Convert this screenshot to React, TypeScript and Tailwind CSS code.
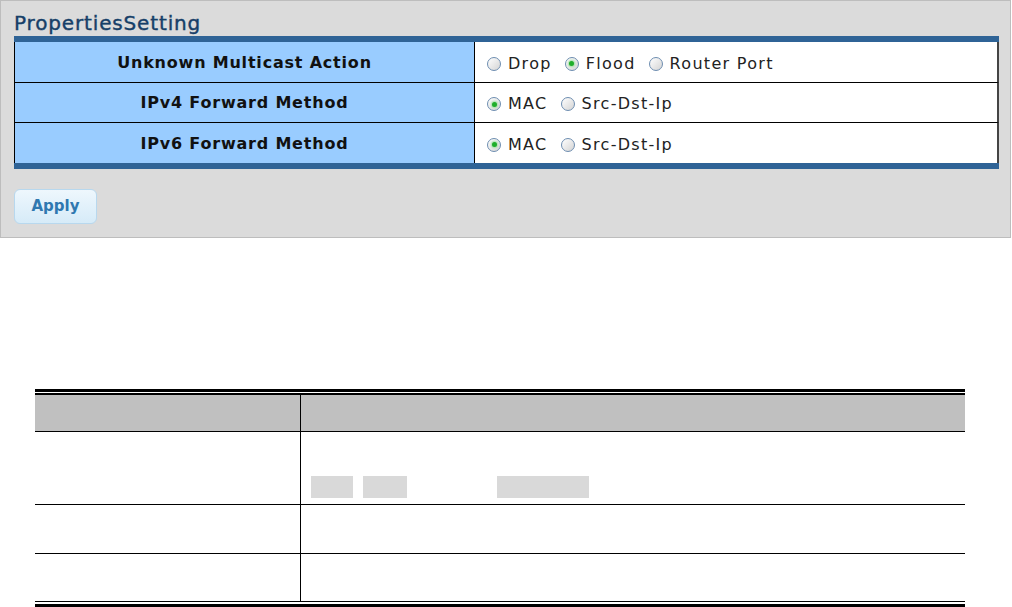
const rows = [
  { label: "Unknown Multicast Action", options: ["Drop", "Flood", "Router Port"], checked: "Flood" },
  { label: "IPv4 Forward Method", options: ["MAC", "Src-Dst-Ip"], checked: "MAC" },
  { label: "IPv6 Forward Method", options: ["MAC", "Src-Dst-Ip"], checked: "MAC" },
];

function Radio({ on }: { on: boolean }) {
  return (
    <span className="relative inline-flex h-[14px] w-[14px] shrink-0 items-center justify-center rounded-full border border-[#6d8db0] bg-gradient-to-br from-white to-[#d4d4d4]">
      {on && <span className="h-[5px] w-[5px] rounded-full bg-[#1fae2a] shadow-[0_0_2px_1px_#9fe0a3]" />}
    </span>
  );
}

export default function App() {
  return (
    <div className="h-[607px] w-[1012px] bg-white" style={{ fontFamily: '"DejaVu Sans", Verdana, sans-serif' }}>
      {/* Properties panel */}
      <div className="h-[238px] w-[1011px] border border-[#bdbdbd] bg-[#dbdbdb] pl-[13px] pt-[10px]">
        <div className="mb-px h-[24px] text-[20px] leading-[24px] tracking-[0.85px] text-[#163f68] [-webkit-text-stroke:0.4px_#163f68]">
          PropertiesSetting
        </div>

        <div className="w-[985px]">
          <div className="h-[6px] bg-[#2f6396]" />
          {rows.map((r, i) => (
            <div
              key={r.label}
              className={`grid grid-cols-[460px_1fr] border-l border-r-2 border-l-black border-r-[#444] ${
                i === 0 ? "h-[41px] border-b border-b-black" : i === 1 ? "h-[40px] border-b border-b-black" : "h-[40px]"
              }`}
            >
              <div className="flex items-center justify-center border-r border-black bg-[#99ccff] pt-px text-[16px] font-bold tracking-[0.8px] text-[#111]">
                {r.label}
              </div>
              <div className="flex items-center bg-white pl-[12px] pt-[3px] text-[16px] tracking-[1.3px] text-[#222]">
                {r.options.map((o) => (
                  <label key={o} className="mr-[13px] flex items-center gap-[7px]">
                    <Radio on={o === r.checked} />
                    <span>{o}</span>
                  </label>
                ))}
              </div>
            </div>
          ))}
          <div className="h-[6px] bg-[#2f6396]" />
        </div>

        <button className="mt-[20px] h-[35px] w-[83px] rounded-[6px] border border-[#b8d8ee] bg-gradient-to-b from-[#eef7fd] to-[#d6ebf8] text-[15px] font-bold text-[#2f78b0]">
          Apply
        </button>
      </div>

      {/* Description table */}
      <div className="ml-[35px] mt-[151px] w-[930px]">
        <div className="h-[3px] bg-black" />
        <div className="h-px bg-white" />
        <div className="h-[2px] bg-black" />
        <div className="grid h-[37px] grid-cols-[266px_1fr] border-b border-black bg-[#c0c0c0]">
          <div className="border-r border-black" />
          <div />
        </div>
        <div className="grid h-[73px] grid-cols-[266px_1fr] border-b border-black">
          <div className="border-r border-black" />
          <div className="flex items-end gap-[10px] pb-[6px] pl-[10px]">
            <span className="h-[22px] w-[42px] bg-[#d9d9d9]" />
            <span className="h-[22px] w-[44px] bg-[#d9d9d9]" />
            <span className="ml-[80px] h-[22px] w-[92px] bg-[#d9d9d9]" />
          </div>
        </div>
        <div className="grid h-[49px] grid-cols-[266px_1fr] border-b border-black">
          <div className="border-r border-black" />
          <div />
        </div>
        <div className="grid h-[47px] grid-cols-[266px_1fr]">
          <div className="border-r border-black" />
          <div />
        </div>
        <div className="h-px bg-black" />
        <div className="h-[2px] bg-white" />
        <div className="h-[3px] bg-black" />
      </div>
    </div>
  );
}
